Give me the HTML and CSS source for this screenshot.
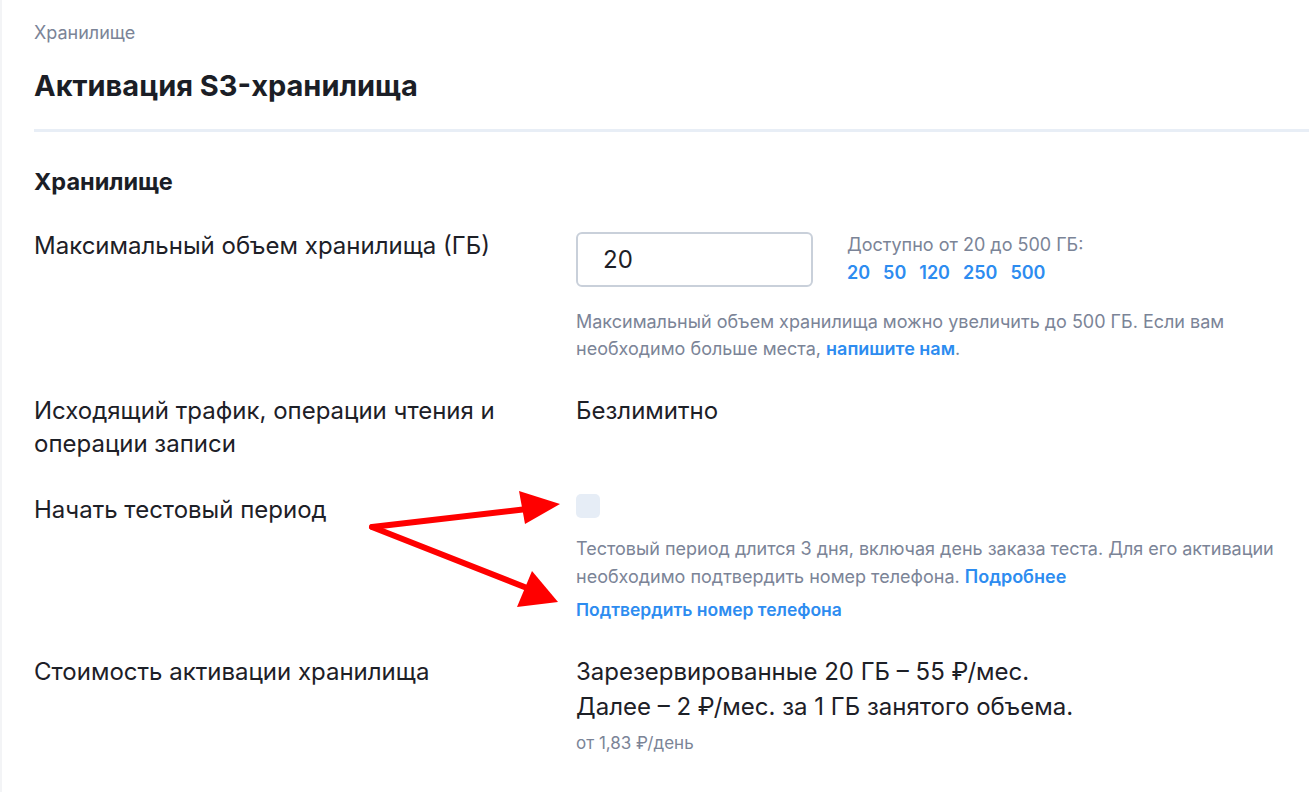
FILE: index.html
```html
<!DOCTYPE html>
<html lang="ru">
<head>
<meta charset="utf-8">
<link rel="stylesheet" href="styles.css">
</head>
<body>
<div class="page">
  <div class="crumb">Хранилище</div>
  <h1 class="title">Активация S3-хранилища</h1>
  <div class="divider"></div>
  <h2 class="section">Хранилище</h2>

  <div class="row row-size">
    <div class="label">Максимальный объем хранилища (ГБ)</div>
    <div class="value">
      <div class="input-line">
        <div class="input">20</div>
        <div class="avail">
          <div class="avail-text">Доступно от 20 до 500 ГБ:</div>
          <div class="presets"><a>20</a><a>50</a><a>120</a><a>250</a><a>500</a></div>
        </div>
      </div>
      <p class="help">Максимальный объем хранилища можно увеличить до 500 ГБ. Если вам<br>необходимо больше места, <a class="link">напишите нам</a>.</p>
    </div>
  </div>

  <div class="row row-traffic">
    <div class="label">Исходящий трафик, операции чтения и<br>операции записи</div>
    <div class="value text">Безлимитно</div>
  </div>

  <div class="row row-test">
    <div class="label">Начать тестовый период</div>
    <div class="value">
      <div class="checkbox"></div>
      <p class="help help-test">Тестовый период длится 3 дня, включая день заказа теста. Для его активации<br>необходимо подтвердить номер телефона. <a class="link">Подробнее</a></p>
      <a class="link confirm">Подтвердить номер телефона</a>
    </div>
  </div>

  <div class="row row-price">
    <div class="label">Стоимость активации хранилища</div>
    <div class="value">
      <div class="price">Зарезервированные 20 ГБ – 55 ₽/мес.<br>Далее – 2 ₽/мес. за 1 ГБ занятого объема.</div>
      <div class="perday">от 1,83 ₽/день</div>
    </div>
  </div>

  <svg class="arrows" width="1309" height="792" viewBox="0 0 1309 792">
    <g fill="#ff0000" stroke="#ff0000">
      <line x1="370" y1="527" x2="525" y2="509" stroke-width="6" stroke-linecap="round"/>
      <polygon points="558,504 517,491 523,524" stroke="none"/>
      <line x1="370" y1="527" x2="525" y2="588" stroke-width="6" stroke-linecap="round"/>
      <polygon points="556,602 530,571 515,607" stroke="none"/>
    </g>
  </svg>
</div>
</body>
</html>
```

FILE: styles.css
```css
* { box-sizing: border-box; }
html, body { margin: 0; padding: 0; background: #fff; }
body {
  font-family: Inter, "Noto Sans", "Liberation Sans", sans-serif;
  color: #1d2027;
}
.page {
  position: relative;
  width: 1309px;
  height: 792px;
  overflow: hidden;
  padding: 22px 0 0 32px;
  border-left: 2px solid #f3f4f6;
}
.crumb { font-size: 18px; color: #7b8497; line-height: 22px; }
.title {
  margin: 24px 0 0;
  font-size: 29px;
  font-weight: 700;
  line-height: 36px;
  color: #1b1e26;
}
.divider { height: 3px; background: #e8eef6; margin-top: 25px; }
.section {
  margin: 35px 0 0;
  font-size: 23.5px;
  font-weight: 700;
  line-height: 30px;
  color: #1b1e26;
}
.row { display: flex; }
.label {
  width: 542px;
  flex: none;
  font-size: 24px;
  line-height: 33px;
  color: #1d2027;
}
.value { flex: 1; min-width: 0; }
.row-size { margin-top: 32px; }
.input-line { display: flex; align-items: flex-start; margin-top: 3px; }
.input {
  width: 237px;
  height: 55px;
  border: 2px solid #c9d0da;
  border-radius: 6px;
  padding: 0 0 0 25px;
  font-size: 24px;
  line-height: 51px;
  color: #1d2027;
}
.avail { margin-left: 34px; }
.avail-text { font-size: 18px; color: #7b8497; line-height: 26px; }
.presets { display: flex; gap: 13px; margin-top: 1px; }
.presets a, .link {
  color: #2d8cf0;
  font-weight: 600;
  text-decoration: none;
}
.presets a { font-size: 18px; line-height: 27px; }
.help {
  margin: 20.5px 0 0;
  font-size: 18px;
  line-height: 27px;
  color: #7b8497;
  white-space: nowrap;
}
.row-traffic { margin-top: 32px; }
.text { font-size: 24px; line-height: 33px; }
.row-test { margin-top: 33px; }
.checkbox {
  width: 24px;
  height: 24px;
  border-radius: 5px;
  background: #e6edf6;
  margin-top: 1.5px;
}
.help-test { margin-top: 17px; line-height: 28px; }
.confirm { display: block; font-size: 17.5px; line-height: 27px; margin-top: 4.5px; }
.row-price { margin-top: 31px; }
.row-price .label { line-height: 35px; }
.price { font-size: 24px; line-height: 35px; }
.perday { font-size: 17px; color: #7b8497; line-height: 22px; margin-top: 8.5px; }
.arrows { position: absolute; left: 0; top: 0; pointer-events: none; }
```
